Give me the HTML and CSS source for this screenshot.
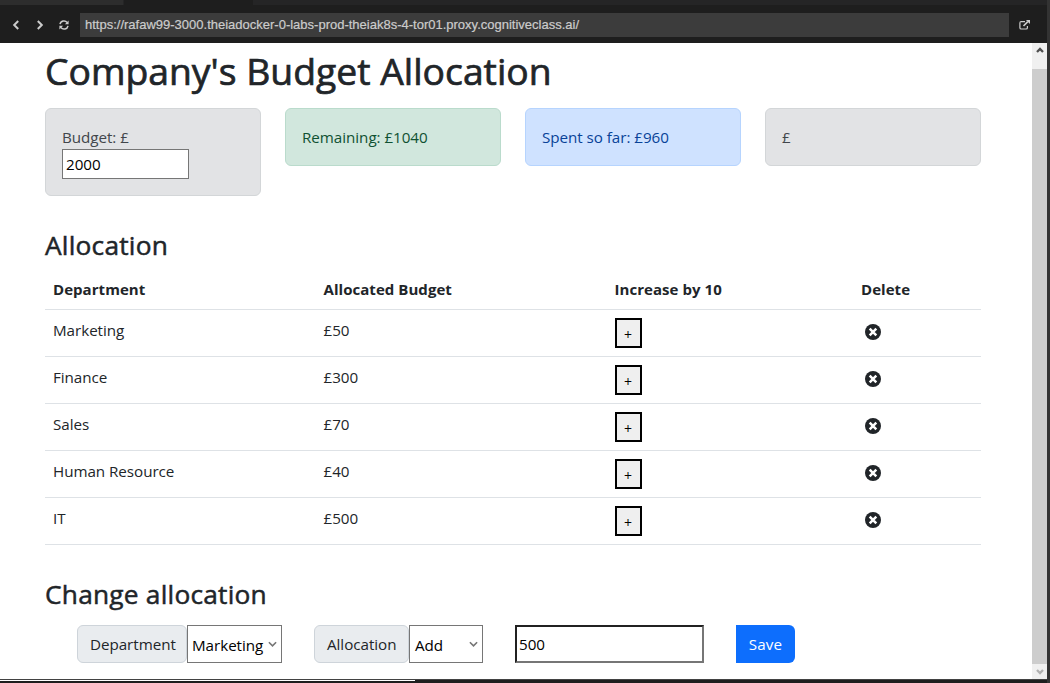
FILE: index.html
```html
<!DOCTYPE html>
<html lang="en">
<head>
<meta charset="utf-8">
<title>Budget Allocation</title>
<link rel="stylesheet" href="styles.css">
</head>
<body>
<svg class="defs" width="0" height="0">
  <symbol id="remove" viewBox="0 0 16 16"><circle cx="8" cy="8" r="8" fill="#212529"/><path d="M4.7 4.7l6.6 6.6M11.3 4.7l-6.6 6.6" stroke="#fff" stroke-width="2.5"/></symbol>
  <symbol id="chevron" viewBox="0 0 10 6"><path d="M1 1l4 4 4-4" fill="none" stroke="currentColor" stroke-width="1.8"/></symbol>
  <symbol id="arrow" viewBox="0 0 8 6"><path d="M1 1l3 3 3-3" fill="none" stroke="currentColor" stroke-width="2.3"/></symbol>
</svg>
<div class="tabs"><span class="tab-left"></span><span class="tab-active"></span></div>
<header class="toolbar">
  <svg class="nav back" viewBox="0 0 8 10"><path d="M6.2 1L2.2 5l4 4" /></svg>
  <svg class="nav forward" viewBox="0 0 8 10"><path d="M1.8 1l4 4-4 4" /></svg>
  <svg class="reload" viewBox="0 0 10 10"><path d="M1 4.2A4 4 0 0 1 8.2 2.6M9 5.8A4 4 0 0 1 1.8 7.4" fill="none" stroke="#ccc" stroke-width="1.5"/><path d="M9.6.5v3.7H5.9zM.4 9.5V5.8h3.7z" fill="#ccc"/></svg>
  <div class="address"><span>https://rafaw99-3000.theiadocker-0-labs-prod-theiak8s-4-tor01.proxy.cognitiveclass.ai/</span></div>
  <svg class="external" viewBox="0 0 11 10"><path d="M6 1.6H2.2Q.9 1.6.9 2.9v4.8q0 1.3 1.3 1.3h4.9q1.3 0 1.3-1.3V6" fill="none" stroke="#ccc" stroke-width="1.2"/><path d="M4.5 6l4.3-4.3" stroke="#ccc" stroke-width="1.7"/><path d="M6.9 0H11v4.1z" fill="#ccc"/></svg>
</header>
<div class="viewport">
  <main class="page">
    <h1>Company's Budget Allocation</h1>
    <section class="summary">
      <div class="card gray"><span>Budget: £</span><input class="budget" value="2000"></div>
      <div class="card green"><span>Remaining: £1040</span></div>
      <div class="card blue"><span>Spent so far: £960</span></div>
      <div class="card gray"><span>£</span></div>
    </section>
    <h2>Allocation</h2>
    <table>
      <thead><tr><th class="c1">Department</th><th class="c2">Allocated Budget</th><th class="c3">Increase by 10</th><th>Delete</th></tr></thead>
      <tbody>
        <tr><td>Marketing</td><td>£50</td><td><button class="plus">+</button></td><td><svg class="remove"><use href="#remove"/></svg></td></tr>
        <tr><td>Finance</td><td>£300</td><td><button class="plus">+</button></td><td><svg class="remove"><use href="#remove"/></svg></td></tr>
        <tr><td>Sales</td><td>£70</td><td><button class="plus">+</button></td><td><svg class="remove"><use href="#remove"/></svg></td></tr>
        <tr><td>Human Resource</td><td>£40</td><td><button class="plus">+</button></td><td><svg class="remove"><use href="#remove"/></svg></td></tr>
        <tr><td>IT</td><td>£500</td><td><button class="plus">+</button></td><td><svg class="remove"><use href="#remove"/></svg></td></tr>
      </tbody>
    </table>
    <h2 class="change">Change allocation</h2>
    <form class="controls">
      <span class="label dept">Department</span><span class="select sel-dept">Marketing<svg><use href="#chevron"/></svg></span>
      <span class="label alloc">Allocation</span><span class="select sel-alloc">Add<svg><use href="#chevron"/></svg></span>
      <input class="amount" value="500">
      <button class="save" type="button">Save</button>
    </form>
  </main>
  <aside class="scrollbar">
    <svg class="up"><use href="#arrow"/></svg>
    <div class="thumb"></div>
    <svg class="down"><use href="#arrow"/></svg>
  </aside>
</div>
<footer class="statusbar"><div></div></footer>
</body>
</html>
```
FILE: styles.css
```css
* { box-sizing: border-box; }
body { margin: 0; width: 1050px; height: 683px; overflow: hidden; background: #fff; color: #212529; font: 15.2px/24px "Open Sans", "Noto Sans", sans-serif; letter-spacing: -0.04px; display: flex; flex-direction: column; border-right: 3px solid #333; }
.defs { display: block; position: absolute; }
svg { display: block; flex: none; }
.tabs { height: 5px; flex: none; display: flex; background: #252526; }
.tab-left { width: 124px; background: #2d2d2d; border-right: 1px solid #252526; }
.tab-active { width: 129px; background: #1e1e1e; }
.toolbar { height: 38px; flex: none; display: flex; align-items: center; padding-top: 1px; background: #1e1e1e; }
.nav { width: 8px; height: 10px; fill: none; stroke: #ccc; stroke-width: 2; }
.back { margin-left: 12px; }
.forward { margin-left: 16px; }
.reload { width: 10px; height: 10px; margin-left: 15px; }
.address { width: 929px; height: 24px; margin: 0 0 0 11px; padding-left: 5px; background: #3c3c3c; color: #ccc; font: 13px/23px "Liberation Sans", sans-serif; letter-spacing: 0; white-space: nowrap; -webkit-text-stroke: 0.2px #ccc; }
.external { width: 11px; height: 10px; margin-left: 10px; }
.viewport { height: 636px; flex: none; display: flex; }
.page { width: 1032px; padding: 1px 51px 0 45px; }
h1, h2 { font-weight: 500; margin: 0; white-space: nowrap; -webkit-text-stroke: 0.5px currentColor; }
h1 { font-size: 37.3px; line-height: 54px; height: 48px; margin-bottom: 16px; letter-spacing: 0; -webkit-text-stroke-width: 0.7px; }
.summary { display: grid; grid-template-columns: repeat(4, 216px); gap: 24px; align-items: start; height: 88px; margin-bottom: 33px; }
.card { padding: 16px; border: 1px solid; border-radius: 6px; display: flex; flex-direction: column; align-items: flex-start; }
.card span { line-height: 24px; height: 24px; }
.gray { background: #e2e3e5; border-color: #d3d6d8; color: #41464b; }
.green { background: #d1e7dd; border-color: #badbcc; color: #0f5132; }
.blue { background: #cfe2ff; border-color: #b6d4fe; color: #084298; }
input { font: inherit; letter-spacing: inherit; color: #000; background: #fff; border-radius: 0; margin: 0; outline: 0; }
.budget { width: 127px; height: 30px; border: 1px solid #767676; padding: 1px 3px; }
h2 { font-size: 26.3px; line-height: 32px; height: 40px; letter-spacing: 0.22px; }
table { width: 936px; border-collapse: separate; border-spacing: 0; table-layout: fixed; }
th, td { text-align: left; vertical-align: top; padding: 8px; border-bottom: 1px solid #dee2e6; }
th { height: 41px; font-weight: 700; font-size: 15px; letter-spacing: 0.05px; }
td { height: 47px; line-height: 24px; }
.c1 { width: 270.5px; } .c2 { width: 291px; } .c3 { width: 246.5px; }
.plus { display: block; width: 27px; height: 30px; padding: 3px 0 0; border: 2px solid #000; border-radius: 0; background: #efefef; color: #000; font: 14px/20px "Open Sans", sans-serif; }
.remove { width: 16px; height: 16px; margin: 6px 0 0 4px; }
.change { margin-top: 33px; height: 47px; }
.controls { display: flex; margin: 0 0 0 32px; height: 38px; }
.label { padding: 6px 0 0 12px; border: 1px solid #ced4da; border-radius: 6px; background: #e9ecef; }
.dept { width: 110px; }
.alloc { width: 95px; margin-left: 32px; }
.select { display: flex; align-items: center; justify-content: space-between; padding: 2px 4px 0 4px; border: 1px solid #767676; background: #fff; color: #000; }
.select svg { width: 9px; height: 6px; margin-bottom: 2px; color: #767676; }
.sel-dept { width: 95px; }
.sel-alloc { width: 74px; padding-left: 5px; }
.amount { width: 189px; height: 38px; margin-left: 32px; padding: 1px 2px; border: 2px solid; border-color: #212121 #767676 #767676 #212121; }
.save { width: 59px; margin-left: 32px; border: 0; border-radius: 0 6px 6px 0; background: #0d6efd; color: #fff; font: inherit; letter-spacing: 0.1px; padding: 0; }
.scrollbar { width: 15px; display: flex; flex-direction: column; align-items: center; background: #f0f0f0; }
.up { width: 8px; height: 6px; margin: 4px 0 16px; color: #505050; transform: rotate(180deg); }
.thumb { width: 15px; height: 595px; background: #cdcdcd; }
.down { width: 8px; height: 6px; margin-top: 5px; color: #b0b0b0; }
.statusbar { height: 4px; flex: none; background: #1e1e1e; border-top: 1px solid #424242; }
.statusbar div { width: 415px; height: 1px; background: #fff; }
```
